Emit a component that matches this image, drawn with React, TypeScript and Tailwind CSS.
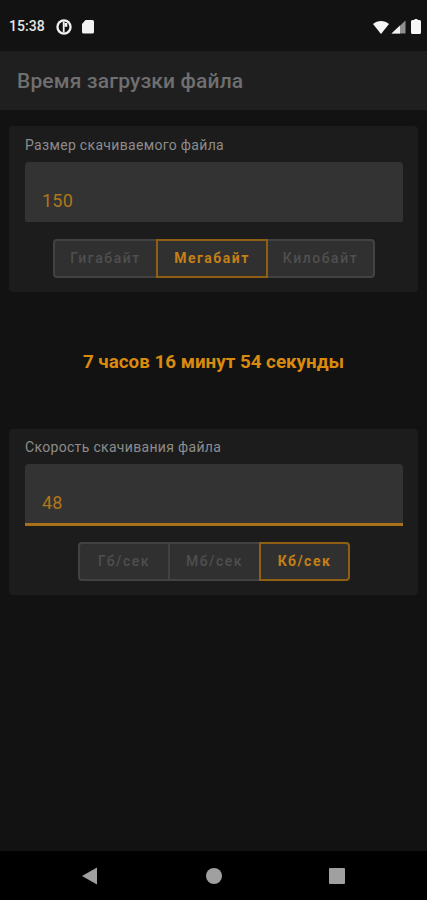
const font = { fontFamily: "Roboto, 'Noto Sans', sans-serif" };

function Toggle({ items, active, widths }: { items: string[]; active: number; widths: string[] }) {
  return (
    <div className="flex h-[39px] justify-center">
      {items.map((t, i) => {
        const on = i === active;
        const first = i === 0;
        const last = i === items.length - 1;
        return (
          <div
            key={t}
            className={`flex h-full items-center justify-center border-2 bg-[#303030] text-[14px] tracking-[1.5px] ${widths[i]} ${
              on ? "z-10 border-[#8f5f14] font-bold text-[#c47f17]" : "border-[#424242] font-medium text-[#4f4f4f]"
            } ${first ? "rounded-l-[4px]" : "-ml-[2px]"} ${last ? "rounded-r-[4px]" : ""}`}
          >
            {t}
          </div>
        );
      })}
    </div>
  );
}

function Card({
  label,
  value,
  focused,
  children,
}: {
  label: string;
  value: string;
  focused?: boolean;
  children: React.ReactNode;
}) {
  return (
    <section className={`mx-[9px] h-[166px] rounded-[4px] bg-[#1c1c1c] pl-4 pr-[15px] ${focused ? "pt-[9px]" : "pt-[10px]"}`}>
      <div className="h-[26px] text-[14px] leading-[18px] tracking-[0.32px] text-[#8c8c8c]">{label}</div>
      <div
        className={`flex items-end rounded-t-[4px] bg-[#333333] px-[17px] text-[18px] leading-[22px] tracking-[0.2px] text-[#b0761a] ${
          focused ? "h-[62px] border-b-[3px] border-[#a8701a] pb-[9px]" : "h-[60px] rounded-b-[2px] pb-[10px]"
        }`}
      >
        {value}
      </div>
      <div className={focused ? "mt-[16px]" : "mt-[17px]"}>{children}</div>
    </section>
  );
}

export default function App() {
  return (
    <div style={font} className="flex h-[900px] w-[427px] flex-col overflow-hidden bg-[#121212]">
      <header className="flex h-[51px] shrink-0 items-center justify-between pl-[9px] pr-[6px] pt-[2px]">
        <div className="flex items-center">
          <span className="text-[14px] font-medium tracking-[0.05px] text-[#e4e4e4]">15:38</span>
          <svg className="ml-[11px]" width="16" height="16" viewBox="0 0 16 16">
            <circle cx="8" cy="8" r="7.7" fill="#f2f2f2" />
            <circle cx="8" cy="8" r="5.400" fill="#111" />
            <rect x="6.800" y="2.500" width="1.800" height="11" fill="#f2f2f2" />
            <rect x="8.500" y="4" width="2.800" height="3.800" fill="#f2f2f2" />
          </svg>
          <svg className="ml-[9px]" width="14" height="15" viewBox="0 0 14 15">
            <path d="M4.500 1H11.500A1.500 1.500 0 0 1 13 2.500V13A1.500 1.500 0 0 1 11.500 14.500H2.500A1.500 1.500 0 0 1 1 13V5Z" fill="#f2f2f2" />
          </svg>
        </div>
        <div className="flex items-center">
          <svg width="16" height="14" viewBox="0 0 16 14">
            <path d="M0 4C4.500 0 11.500 0 16 4L8 14Z" fill="#f5f5f5" />
          </svg>
          <svg className="ml-[2px]" width="15" height="14" viewBox="0 0 15 14">
            <path d="M0.500 13.500L14.500 0.500V13.500Z" fill="#8f8f8f" />
            <path d="M0.500 13.500L9 5.600V13.500Z" fill="#f0f0f0" />
          </svg>
          <svg className="ml-[5px]" width="10" height="15" viewBox="0 0 10 15">
            <path d="M3.500 0H6.500V1H8.500A1.500 1.500 0 0 1 10 2.500V13.500A1.500 1.500 0 0 1 8.500 15H1.500A1.500 1.500 0 0 1 0 13.500V2.500A1.500 1.500 0 0 1 1.500 1H3.500Z" fill="#f5f5f5" />
          </svg>
        </div>
      </header>

      <div className="flex h-[59px] shrink-0 items-center bg-[#1f1f1f] pl-[17px] pt-[2px] text-[21px] font-medium tracking-[0.15px] text-[#6f6f6f]">
        Время загрузки файла
      </div>

      <main className="flex min-h-0 flex-1 flex-col pt-[16px]">
        <Card label="Размер скачиваемого файла" value="150">
          <Toggle items={["Гигабайт", "Мегабайт", "Килобайт"]} active={1} widths={["w-[105px]", "w-[112px]", "w-[109px]"]} />
        </Card>

        <div className="flex h-[137px] items-center justify-center pt-[3px] text-[18.8px] font-bold text-[#d98a0f]">
          7 часов 16 минут 54 секунды
        </div>

        <Card label="Скорость скачивания файла" value="48" focused>
          <Toggle items={["Гб/сек", "Мб/сек", "Кб/сек"]} active={2} widths={["w-[92px]", "w-[93px]", "w-[91px]"]} />
        </Card>
      </main>

      <nav className="flex h-[49px] shrink-0 items-center justify-between bg-black pl-[81px] pr-[82px]">
        <svg width="18" height="18" viewBox="0 0 18 18">
          <path d="M16 0.500V17.500L1 9Z" fill="#a0a0a0" />
        </svg>
        <svg width="16" height="16" viewBox="0 0 16 16">
          <circle cx="8" cy="8" r="8" fill="#a0a0a0" />
        </svg>
        <svg width="16" height="16" viewBox="0 0 16 16">
          <rect width="16" height="16" rx="1" fill="#a0a0a0" />
        </svg>
      </nav>
    </div>
  );
}
